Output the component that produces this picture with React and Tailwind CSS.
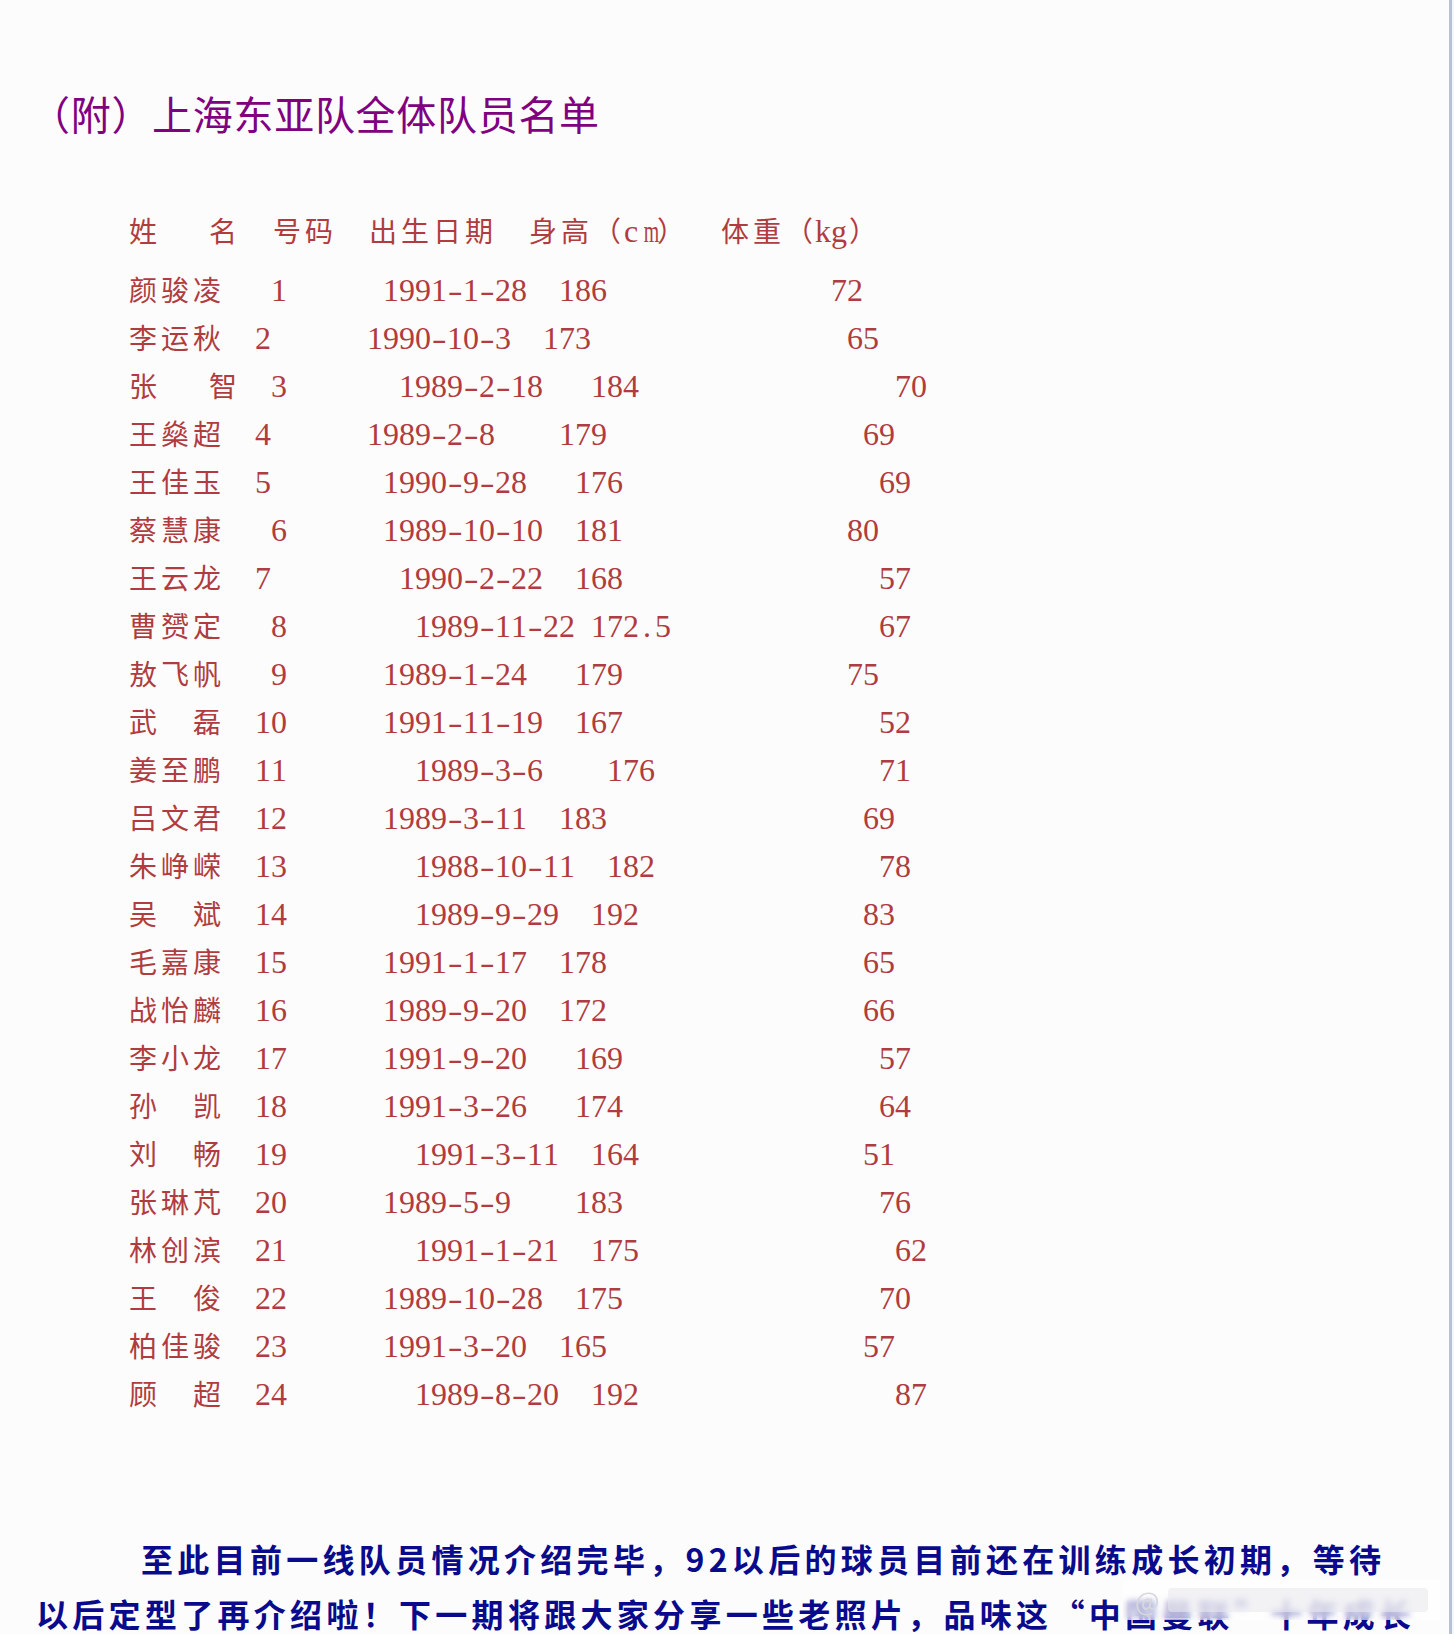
import React from "react";

// 每行按“半角单位”排版：汉字占 2 个单位，数字、横线、空格占 1 个单位（16px）
const header = [
  ["姓", 0],
  ["名", 5],
  ["号码", 9],
  ["出生日期", 15],
  ["身高（cm）", 25],
  ["体重（kg）", 37],
];

const players = [
  [["颜骏凌", 0], ["1", 9], ["1991-1-28", 16], ["186", 27], ["72", 44]],
  [["李运秋", 0], ["2", 8], ["1990-10-3", 15], ["173", 26], ["65", 45]],
  [["张", 0], ["智", 5], ["3", 9], ["1989-2-18", 17], ["184", 29], ["70", 48]],
  [["王燊超", 0], ["4", 8], ["1989-2-8", 15], ["179", 27], ["69", 46]],
  [["王佳玉", 0], ["5", 8], ["1990-9-28", 16], ["176", 28], ["69", 47]],
  [["蔡慧康", 0], ["6", 9], ["1989-10-10", 16], ["181", 28], ["80", 45]],
  [["王云龙", 0], ["7", 8], ["1990-2-22", 17], ["168", 28], ["57", 47]],
  [["曹赟定", 0], ["8", 9], ["1989-11-22", 18], ["172.5", 29], ["67", 47]],
  [["敖飞帆", 0], ["9", 9], ["1989-1-24", 16], ["179", 28], ["75", 45]],
  [["武", 0], ["磊", 4], ["10", 8], ["1991-11-19", 16], ["167", 28], ["52", 47]],
  [["姜至鹏", 0], ["11", 8], ["1989-3-6", 18], ["176", 30], ["71", 47]],
  [["吕文君", 0], ["12", 8], ["1989-3-11", 16], ["183", 27], ["69", 46]],
  [["朱峥嵘", 0], ["13", 8], ["1988-10-11", 18], ["182", 30], ["78", 47]],
  [["吴", 0], ["斌", 4], ["14", 8], ["1989-9-29", 18], ["192", 29], ["83", 46]],
  [["毛嘉康", 0], ["15", 8], ["1991-1-17", 16], ["178", 27], ["65", 46]],
  [["战怡麟", 0], ["16", 8], ["1989-9-20", 16], ["172", 27], ["66", 46]],
  [["李小龙", 0], ["17", 8], ["1991-9-20", 16], ["169", 28], ["57", 47]],
  [["孙", 0], ["凯", 4], ["18", 8], ["1991-3-26", 16], ["174", 28], ["64", 47]],
  [["刘", 0], ["畅", 4], ["19", 8], ["1991-3-11", 18], ["164", 29], ["51", 46]],
  [["张琳芃", 0], ["20", 8], ["1989-5-9", 16], ["183", 28], ["76", 47]],
  [["林创滨", 0], ["21", 8], ["1991-1-21", 18], ["175", 29], ["62", 48]],
  [["王", 0], ["俊", 4], ["22", 8], ["1989-10-28", 16], ["175", 28], ["70", 47]],
  [["柏佳骏", 0], ["23", 8], ["1991-3-20", 16], ["165", 27], ["57", 46]],
  [["顾", 0], ["超", 4], ["24", 8], ["1989-8-20", 18], ["192", 29], ["87", 48]],
];

const isWide = (ch) => ch.charCodeAt(0) >= 0x2e80;

const buildLine = (parts) => {
  let s = "";
  let u = 0;
  parts.forEach(([text, at]) => {
    while (u < at) {
      s += " ";
      u += 1;
    }
    for (const ch of text) {
      s += ch;
      u += isWide(ch) ? 2 : 1;
    }
  });
  return s;
};

const Char = ({ ch }) => {
  if (ch === " ") return <span className="inline-block w-4" />;
  if (isWide(ch)) {
    return (
      <span className="inline-block w-8 text-center font-['Noto_Sans_CJK_SC',sans-serif] text-[28px]">
        {ch}
      </span>
    );
  }
  if (ch === "-") {
    return (
      <span className="inline-block w-4 text-center">
        <span className="inline-block scale-x-[1.4]">-</span>
      </span>
    );
  }
  if (ch === "m") {
    return (
      <span className="inline-block w-4 text-center">
        <span className="inline-block scale-x-[0.62]">m</span>
      </span>
    );
  }
  return <span className="inline-block w-4 text-center">{ch}</span>;
};

const Line = ({ parts, className = "" }) => (
  <div className={`h-12 whitespace-nowrap leading-[48px] ${className}`}>
    {[...buildLine(parts)].map((ch, i) => (
      <Char key={i} ch={ch} />
    ))}
  </div>
);

export default function App() {
  return (
    <div className="relative flex h-[1634px] w-[1454px] overflow-hidden bg-[#fcfcfd]">
      <main className="w-[1449px] flex-none overflow-hidden">
        <h1 className="pl-[30px] pt-[93px] font-['Noto_Sans_CJK_SC',sans-serif] text-[40px] font-normal leading-[40px] tracking-[0.7px] text-[#800080]">
          （附）上海东亚队全体队员名单
        </h1>

        <section className="mt-[73px] pl-[127px] font-['Liberation_Serif',serif] text-[32px] text-[#b03c40]">
          <Line parts={header} className="mb-[11px]" />
          {players.map((p, i) => (
            <Line key={i} parts={p} />
          ))}
        </section>

        <div className="mt-[114px] pl-[36px] font-['Noto_Sans_CJK_SC',sans-serif] text-[32px] font-bold leading-[55px] tracking-[4.3px] text-[#0a0a8c]">
          <p className="whitespace-nowrap pl-[105px]">
            至此目前一线队员情况介绍完毕，92以后的球员目前还在训练成长初期，等待
          </p>
          <p className="whitespace-nowrap">
            以后定型了再介绍啦！下一期将跟大家分享一些老照片，品味这“中国曼联”十年成长
          </p>
        </div>
      </main>
      <div className="w-[3px] flex-none bg-[#b9c1d6]" />
      <div className="flex-1 bg-[#f3f5f9]" />

      {/* 右下角水印 */}
      <div className="absolute left-[1123px] top-[1580px] flex h-[40px] w-[317px] items-center gap-2 rounded-sm bg-white/60 px-3 backdrop-blur-[3px]">
        <span className="font-['Noto_Sans_CJK_SC',sans-serif] text-[26px] leading-none text-[#d6d8de]">@</span>
        <span className="h-[24px] flex-1 rounded-sm bg-[#e9eaee]/60" />
      </div>
    </div>
  );
}
